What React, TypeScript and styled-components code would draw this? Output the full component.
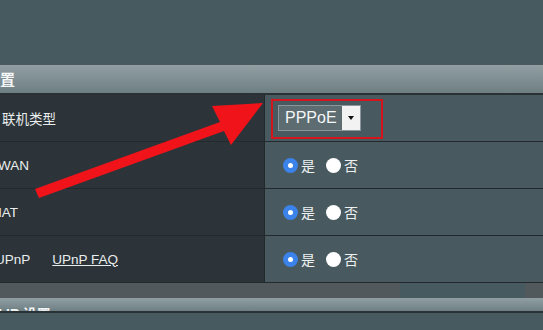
import React from "react";
import styled, { createGlobalStyle } from "styled-components";

const Global = createGlobalStyle`
    html, body {
        margin: 0;
        padding: 0;
        background: #465a5f;
    }
    body {
        font-family: "Liberation Sans", "Noto Sans CJK SC", sans-serif;
    }
`;

const Screen = styled.div`
    position: relative;
    width: 543px;
    height: 330px;
    overflow: hidden;
    background: #465a5f;
    display: flex;
    flex-direction: column;
`;

const Spacer = styled.div`
    height: 65px;
    flex-shrink: 0;
`;

const SectionHead = styled.div<{ $height: number }>`
    height: ${(p) => p.$height}px;
    flex-shrink: 0;
    overflow: hidden;
    display: flex;
    align-items: flex-start;
    background: linear-gradient(#919fa3, #6e7f84);
    border-bottom: 2px solid #2a3236;
    color: #f3f5f6;
    font-weight: bold;
    font-size: 15px;
    > span {
        white-space: nowrap;
    }
`;

const Table = styled.div`
    display: flex;
    flex-direction: column;
`;

const Row = styled.div`
    display: grid;
    grid-template-columns: 265px 1fr;
    height: 47px;
    border-bottom: 1px solid #23292c;
    box-sizing: border-box;
`;

const Label = styled.div<{ $offset: number }>`
    background: #2c3439;
    border-right: 1px solid #22292c;
    display: flex;
    align-items: center;
    gap: 22px;
    overflow: hidden;
    color: #e9edee;
    font-size: 13.5px;
    > span:first-child {
        margin-left: ${(p) => p.$offset}px;
        white-space: nowrap;
    }
`;

const Link = styled.span`
    text-decoration: underline;
    white-space: nowrap;
`;

const Value = styled.div`
    background: #485a5f;
    display: flex;
    align-items: center;
    padding-left: 18px;
    color: #eef1f2;
    font-size: 14px;
`;

const Highlight = styled.div`
    border: 2px solid #d4151c;
    padding: 4px 20px 6px 5px;
    margin-left: -12px;
    margin-top: 1px;
`;

const Select = styled.div`
    display: flex;
    height: 26px;
    border: 1px solid #8a9699;
    background: #5c6c70;
    box-sizing: border-box;
    > span {
        padding: 0 5px 0 6px;
        line-height: 24px;
        font-size: 16px;
        color: #f4f6f7;
    }
`;

const Caret = styled.div`
    width: 18px;
    background: #f2f2f2;
    display: flex;
    align-items: center;
    justify-content: center;
    &::after {
        content: "";
        border-left: 3px solid transparent;
        border-right: 3px solid transparent;
        border-top: 4px solid #111;
    }
`;

const Radio = styled.span<{ $on?: boolean }>`
    width: 15px;
    height: 15px;
    border-radius: 50%;
    box-sizing: border-box;
    background: ${(p) => (p.$on ? "#3b83ea" : "#ffffff")};
    display: inline-flex;
    align-items: center;
    justify-content: center;
    margin-right: 3px;
    &::after {
        content: "";
        width: 5px;
        height: 5px;
        border-radius: 50%;
        background: ${(p) => (p.$on ? "#ffffff" : "transparent")};
    }
`;

const Choice = styled.label`
    display: inline-flex;
    align-items: center;
    margin-right: 11px;
`;

const Strip = styled.div`
    height: 15px;
    flex-shrink: 0;
    display: grid;
    grid-template-columns: 400px 125px 1fr;
    background: #52595d;
    > div:nth-child(2) {
        background: #465a5f;
    }
`;

const Arrow = styled.svg`
    position: absolute;
    left: 0;
    top: 0;
    pointer-events: none;
`;

function YesNo() {
    return (
        <Value>
            <Choice><Radio $on />是</Choice>
            <Choice><Radio />否</Choice>
        </Value>
    );
}

export default function App() {
    return (
        <Screen>
            <Global />
            <Spacer />
            <SectionHead $height={28}>
                <span style={{ marginLeft: -15, marginTop: 3 }}>设置</span>
            </SectionHead>
            <Table>
                <Row>
                    <Label $offset={2}><span>联机类型</span></Label>
                    <Value>
                        <Highlight>
                            <Select>
                                <span>PPPoE</span>
                                <Caret />
                            </Select>
                        </Highlight>
                    </Value>
                </Row>
                <Row>
                    <Label $offset={-2}><span>WAN</span></Label>
                    <YesNo />
                </Row>
                <Row>
                    <Label $offset={-8}><span>NAT</span></Label>
                    <YesNo />
                </Row>
                <Row>
                    <Label $offset={-5}><span>UPnP</span><Link>UPnP FAQ</Link></Label>
                    <YesNo />
                </Row>
            </Table>
            <Strip>
                <div />
                <div />
                <div />
            </Strip>
            <SectionHead $height={13}>
                <span style={{ marginLeft: -8, marginTop: 5, fontSize: 14 }}>N IP 设置</span>
            </SectionHead>
            <Arrow width="543" height="330" viewBox="0 0 543 330">
                <polygon
                    fill="#f0141a"
                    points="35,189 220,122 212,106 263,103 231,145 224,131 39,198"
                />
            </Arrow>
        </Screen>
    );
}
